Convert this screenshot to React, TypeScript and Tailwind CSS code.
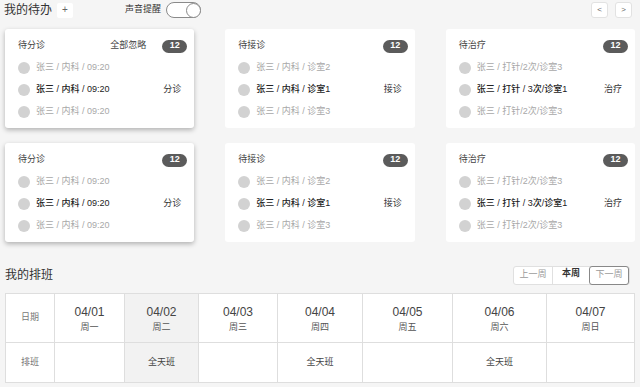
import * as React from "react"

type Row = { text: string; active?: boolean; action?: string }

type CardData = {
  title: string
  extra?: string
  rows: Row[]
}

const cardsTop: CardData[] = [
  {
    title: "待分诊",
    extra: "全部忽略",
    rows: [
      { text: "张三 / 内科 / 09:20" },
      { text: "张三 / 内科 / 09:20", active: true, action: "分诊" },
      { text: "张三 / 内科 / 09:20" },
    ],
  },
  {
    title: "待接诊",
    rows: [
      { text: "张三 / 内科 / 诊室2" },
      { text: "张三 / 内科 / 诊室1", active: true, action: "接诊" },
      { text: "张三 / 内科 / 诊室3" },
    ],
  },
  {
    title: "待治疗",
    rows: [
      { text: "张三 / 打针/2次/诊室3" },
      { text: "张三 / 打针 / 3次/诊室1", active: true, action: "治疗" },
      { text: "张三 / 打针/2次/诊室3" },
    ],
  },
]

const cardsBottom: CardData[] = [{ ...cardsTop[0], extra: undefined }, cardsTop[1], cardsTop[2]]

const days = [
  { date: "04/01", week: "周一", shift: "" },
  { date: "04/02", week: "周二", shift: "全天班", today: true },
  { date: "04/03", week: "周三", shift: "" },
  { date: "04/04", week: "周四", shift: "全天班" },
  { date: "04/05", week: "周五", shift: "" },
  { date: "04/06", week: "周六", shift: "全天班" },
  { date: "04/07", week: "周日", shift: "" },
]

function TodoCard({ card, raised }: { card: CardData; raised?: boolean }) {
  return (
    <div
      className={
        "h-[99px] rounded-[3px] bg-white px-[13px] pt-[10px] " +
        (raised ? "shadow-[0_2px_5px_rgba(0,0,0,0.28)]" : "")
      }
    >
      <div className="flex h-[14px] items-center text-[9px] text-[#444]">
        <span className="flex-1">{card.title}</span>
        {card.extra && <span className="mr-[16px]">{card.extra}</span>}
        <span className="-mr-[6px] flex h-[13px] w-[25px] items-center justify-center rounded-full bg-[#5b5b5b] text-[9px] font-bold text-white">
          12
        </span>
      </div>
      <div className="mt-[4px]">
        {card.rows.map((r, i) => (
          <div key={i} className="flex h-[22px] items-center text-[9px]">
            <span className="size-[12px] shrink-0 rounded-full bg-[#d2d2d2]" />
            <span
              className={
                "ml-[6px] flex-1 " +
                (r.active ? "font-medium text-[#222]" : "text-[#a8a8a8]")
              }
            >
              {r.text}
            </span>
            {r.action && <span className="text-[#333]">{r.action}</span>}
          </div>
        ))}
      </div>
    </div>
  )
}

export default function App() {
  return (
    <div
      className="h-[387px] w-[640px] overflow-hidden bg-[#f5f5f5] px-[5px] text-[#333]"
      style={{ fontFamily: "'Liberation Sans', 'Noto Sans CJK SC', sans-serif" }}
    >
      {/* top bar */}
      <div className="flex h-[20px] items-center">
        <span className="-ml-px text-[12px] text-[#333]">我的待办</span>
        <button className="ml-[5px] flex h-[15px] w-[16px] items-center justify-center rounded-[2px] bg-white text-[10px] leading-none text-[#666]">
          +
        </button>
        <span className="ml-[52px] text-[9px] text-[#333]">声音提醒</span>
        <div className="ml-[5px] flex h-[16px] w-[35px] items-center justify-end rounded-full border border-[#8a8a8a] bg-white">
          <span className="size-[15px] -mr-px rounded-full border border-[#8a8a8a] bg-white" />
        </div>
        <div className="ml-auto mr-[3px] flex gap-[7px]">
          <button className="flex h-[16px] w-[17px] items-center justify-center rounded-[3px] border border-[#e2e2e2] bg-white text-[8px] text-[#666]">
            &lt;
          </button>
          <button className="flex h-[16px] w-[17px] items-center justify-center rounded-[3px] border border-[#e2e2e2] bg-white text-[8px] text-[#666]">
            &gt;
          </button>
        </div>
      </div>

      {/* todo cards */}
      <div className="mt-[9px] grid grid-cols-3 gap-x-[31px] gap-y-[15px]">
        {cardsTop.map((c, i) => (
          <TodoCard key={"t" + i} card={c} raised={i === 0} />
        ))}
        {cardsBottom.map((c, i) => (
          <TodoCard key={"b" + i} card={c} raised={i === 0} />
        ))}
      </div>

      {/* schedule */}
      <div className="mt-[23px] flex h-[20px] items-center">
        <span className="text-[12px] text-[#333]">我的排班</span>
        <div className="ml-auto mr-[5px] flex h-[19px] rounded-[3px] border border-[#e0e0e0] bg-white text-[9px]">
          <button className="w-[38px] text-[#9a9a9a]">上一周</button>
          <button className="w-[37px] border-l border-[#e0e0e0] pb-[3px] font-bold text-[#333]">本周</button>
          <button className="-my-px w-[40px] rounded-[3px] border border-[#888] text-[#9a9a9a]">下一周</button>
        </div>
      </div>

      <div className="mt-[8px] grid grid-cols-[49px_70px_74px_79px_85px_90px_94px_1fr] border-l border-t border-[#dedede] bg-white">
        <div className="flex h-[49px] items-center justify-center border-b border-r border-[#dedede] text-[9px] text-[#777]">
          日期
        </div>
        {days.map((d) => (
          <div
            key={d.date}
            className={
              "flex h-[49px] flex-col items-center justify-center border-b border-r border-[#dedede] " +
              (d.today ? "bg-[#f2f2f2]" : "")
            }
          >
            <span className="text-[12px] leading-[16px] text-[#444]">{d.date}</span>
            <span className="mt-[1px] text-[9px] leading-[12px] text-[#555]">{d.week}</span>
          </div>
        ))}
        <div className="flex h-[40px] items-center justify-center border-b border-r border-[#dedede] text-[9px] text-[#777]">
          排班
        </div>
        {days.map((d) => (
          <div
            key={d.date + "s"}
            className={
              "flex h-[40px] items-center justify-center border-b border-r border-[#dedede] text-[9px] text-[#444] " +
              (d.today ? "bg-[#f2f2f2]" : "")
            }
          >
            {d.shift}
          </div>
        ))}
      </div>
    </div>
  )
}
